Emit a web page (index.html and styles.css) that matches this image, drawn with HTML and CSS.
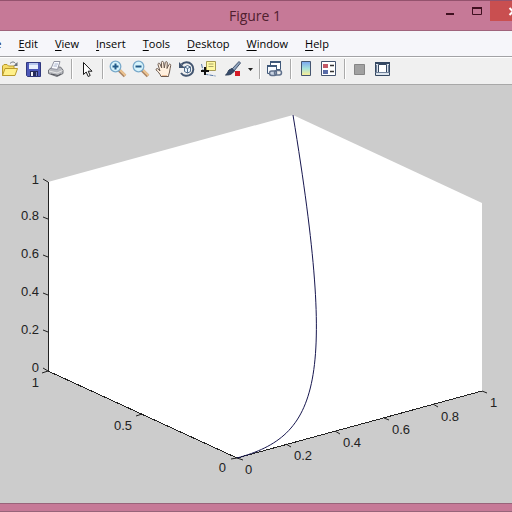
FILE: index.html
```html
<!DOCTYPE html>
<html lang="en">
<head>
<meta charset="utf-8">
<title>Figure 1</title>
<link rel="stylesheet" href="styles.css">
</head>
<body>
<div class="window">
  <header class="titlebar">
    <h1 class="title">Figure 1</h1>
    <div class="controls">
      <button class="control" aria-label="Minimize"><svg viewBox="0 0 26 20"><path d="M8 13h8" stroke="#401020" stroke-width="2"/></svg></button>
      <button class="control" aria-label="Maximize"><svg viewBox="0 0 26 20"><path d="M8.500 7v6.500h9v-7h-9z" fill="none" stroke="#401020"/><path d="M8 7h10" stroke="#401020" stroke-width="2"/></svg></button>
      <button class="control close" aria-label="Close"><svg viewBox="0 0 45 20"><path d="M19.500 7l7 7M26.500 7l-7 7" stroke="#fff" stroke-width="2"/></svg></button>
    </div>
  </header>
  <nav class="menubar">
    <button class="menu"><u>F</u>ile</button>
    <button class="menu"><u>E</u>dit</button>
    <button class="menu"><u>V</u>iew</button>
    <button class="menu"><u>I</u>nsert</button>
    <button class="menu"><u>T</u>ools</button>
    <button class="menu"><u>D</u>esktop</button>
    <button class="menu"><u>W</u>indow</button>
    <button class="menu"><u>H</u>elp</button>
  </nav>
  <div class="toolbar" role="toolbar">
    <button class="tool" aria-label="Open"><svg viewBox="0 0 18 18"><path d="M1.500 15.500V6l1.500-1.500h3L7.500 6H13v9.500z" fill="#f6dc68" stroke="#b99a2c"/><path d="M1.500 15.500L4 8.500h12.500l-2.500 7z" fill="#fff08a" stroke="#b99a2c"/><path d="M9 3.500c2-2 4-2 5.500 0" fill="none" stroke="#687078"/><path d="M16.500 2v4h-4z" fill="#687078"/></svg></button>
    <button class="tool" aria-label="Save"><svg viewBox="0 0 18 18"><path d="M2.500 2.500h14v14h-13l-1-1z" fill="#4d58b8" stroke="#30387e"/><path d="M5 3h9v6H5z" fill="#e9f0fc"/><path d="M5 3h9v2H5z" fill="#b8c8ee"/><path d="M6 11h8v5H6z" fill="#262c58"/><path d="M7 12h2v4H7z" fill="#f4f4fa"/><path d="M12 12h1v4h-1z" fill="#7b84c8"/></svg></button>
    <button class="tool" aria-label="Print"><svg viewBox="0 0 18 18"><path d="M1.500 10l3-2.500 9-.500 2.500 3v3.500l-6 3-8.500-3z" fill="#b7b9be" stroke="#72747b"/><path d="M4 8.500L7 1.500h6l-2.500 8z" fill="#fafbff" stroke="#9294a2"/><path d="M7.500 4h3.500M6.500 6h3.500" stroke="#a5b0ca"/><path d="M2 11l8 2 5.500-2.500" fill="none" stroke="#e8e8e8"/><path d="M4 14l7 1.500 3-1.500" fill="none" stroke="#54565c"/></svg></button>
    <span class="separator"></span>
    <button class="tool" aria-label="Edit plot"><svg viewBox="0 0 18 18"><path d="M5.500 2.500v12l2.700-2.500 2 4.500 2-1-2-4.300H14z" fill="#fff" stroke="#171717"/></svg></button>
    <span class="separator"></span>
    <button class="tool" aria-label="Zoom in"><svg viewBox="0 0 18 18"><path d="M10 10l6 6" stroke="#a98363" stroke-width="3.500"/><path d="M10.500 9.500l6 6" stroke="#edc491" stroke-width="2"/><circle cx="6.500" cy="6.500" r="5.300" fill="#d7f4fc" stroke="#7aaacb" stroke-width="1.300"/><path d="M3.500 6.500h6M6.500 3.500v6" stroke="#225a88" stroke-width="2"/></svg></button>
    <button class="tool" aria-label="Zoom out"><svg viewBox="0 0 18 18"><path d="M10 10l6 6" stroke="#a98363" stroke-width="3.500"/><path d="M10.500 9.500l6 6" stroke="#edc491" stroke-width="2"/><circle cx="6.500" cy="6.500" r="5.300" fill="#d7f4fc" stroke="#7aaacb" stroke-width="1.300"/><path d="M3.500 6.500h6" stroke="#225a88" stroke-width="2"/></svg></button>
    <button class="tool" aria-label="Pan"><svg viewBox="0 0 18 18"><path d="M6 16.500c-1-3-3-4.500-4.800-6.500-.5-1.500 1-2 2-.9L5 11 3 4.700C2.700 3 4.500 2.600 5 4l1.700 4L6.400 2.500c0-1.500 2-1.500 2.200 0L9.300 8l1-5.500c.3-1.400 2.100-1 2 .4L12 8.500l1.800-3.800c.6-1.200 2.200-.6 1.900.8-.5 2.500-.8 4-1.200 6.500-.2 1.500-1 2.500-1 4.500z" fill="#fff0df" stroke="#6b5a50"/><path d="M7 15.500h5" stroke="#efc19a"/></svg></button>
    <button class="tool" aria-label="Rotate 3D"><svg viewBox="0 0 18 18"><path d="M3.500 4.500a6.800 6.800 0 1 1-.5 8.500" fill="none" stroke="#425570" stroke-width="2"/><path d="M1 2v6h6z" fill="#425570"/><path d="M6.500 7l3-1.500L12.500 7v4.500l-3 1.500-3-1.500z" fill="#e9f3fb" stroke="#526d8c"/><path d="M6.500 7l3 1.500 3-1.500M9.500 8.500V13" fill="none" stroke="#526d8c"/></svg></button>
    <button class="tool" aria-label="Data cursor"><svg viewBox="0 0 18 18"><path d="M.5 4c1 5 2 9 5 10.500l9 1.500" fill="none" stroke="#5878a8" stroke-dasharray="4 1"/><path d="M5.500 1.500h9v9h-9z" fill="#fff9a2" stroke="#a69b54"/><path d="M7.500 4h5M7.500 6.500h5" stroke="#aaa66c"/><path d="M0 11h8M4 7v8" stroke="#111" stroke-width="2"/></svg></button>
    <button class="tool" aria-label="Brush"><svg viewBox="0 0 18 18"><path d="M8 9l7-7.500 1.500 1.500L10 11z" fill="#90a4bd" stroke="#445570"/><path d="M8 8.500l2.500 2.500-2 2c-2 2-4.500 2-7 2 2-1 2-3 3.500-5z" fill="#374b6a" stroke="#2c3e59"/><path d="M11 11h5v5h-5z" fill="#d51c27"/></svg></button>
    <button class="tool drop" aria-label="Brush options"><svg viewBox="0 0 11 18"><path d="M3 8h5l-2.500 3z" fill="#222"/></svg></button>
    <span class="separator"></span>
    <button class="tool" aria-label="Link plot"><svg viewBox="0 0 18 18"><path d="M4.500 1.500h10v8h-10z" fill="#fff" stroke="#3f5879"/><path d="M4 2h11" stroke="#3f5879" stroke-width="2"/><path d="M1.500 5.500h9v8h-9z" fill="#f8fbff" stroke="#3f5879"/><path d="M1 6h10" stroke="#3f5879" stroke-width="2"/><rect x="3.500" y="11" width="7" height="4.500" rx="2.200" fill="#c9d3e2" stroke="#60718c" stroke-width="1.500"/><rect x="8.500" y="10.500" width="7" height="4.500" rx="2.200" fill="none" stroke="#60718c" stroke-width="1.500"/></svg></button>
    <span class="separator"></span>
    <button class="tool" aria-label="Insert colorbar"><svg viewBox="0 0 18 18"><defs><linearGradient id="bar" x2="0" y2="1"><stop stop-color="#78a4f0"/><stop offset=".5" stop-color="#a6e2dc"/><stop offset="1" stop-color="#fff092"/></linearGradient></defs><path d="M4.500 1.500h9v14h-9z" fill="url(#bar)" stroke="#455570"/></svg></button>
    <button class="tool" aria-label="Insert legend"><svg viewBox="0 0 18 18"><path d="M1.500 1.500h14v14h-14z" fill="#fff" stroke="#455570"/><path d="M3 4h5v4H3z" fill="#c45866"/><path d="M3 10h5v4H3z" fill="#596ca8"/><path d="M10 5.500h4M10 11.500h4" stroke="#333" stroke-width="1.500"/></svg></button>
    <span class="separator"></span>
    <button class="tool" aria-label="Hide plot tools"><svg viewBox="0 0 18 18"><path d="M3.500 4.500h10v10h-10z" fill="#a1a1a1" stroke="#858585"/></svg></button>
    <button class="tool" aria-label="Show plot tools"><svg viewBox="0 0 18 18"><path d="M1.500 2.500h14v13h-14z" fill="#dce4ed" stroke="#344761"/><path d="M1 3h15" stroke="#344761" stroke-width="2"/><path d="M4.500 4.500h8v8h-8z" fill="#fff" stroke="#344761"/><path d="M1.500 12.500h14M2.500 5v8M14.500 5v8" stroke="#71829a"/></svg></button>
  </div>
  <main class="figure">
    <svg class="plot" viewBox="0 85 512 418" role="img" aria-label="Three-dimensional line plot">
      <path class="walls" d="M48 182L293 115 482 203V391L237 458 48 371z"/>
      <path class="axis" d="M48 182V371L237 458 482 391"/>
      <path class="tick" d="M43 179l5 3M43 217l5 2M43 255l5 2M43 293l5 2M43 330l5 2M43 368l5 3"/>
      <path class="tick" d="M42 373l6-2M136 416l6-2M231 459l6-1"/>
      <path class="tick" d="M237 458l6 2M286 444l5 3M335 431l5 3M384 418l5 2M433 404l5 3M482 391l5 2"/>
      <path class="curve" d="M237 458C318.670 435.670 337.330 384.330 293 115"/>
      <g class="labels end">
        <text x="39" y="184">1</text>
        <text x="39" y="220">0.8</text>
        <text x="39" y="258">0.6</text>
        <text x="39" y="296">0.4</text>
        <text x="39" y="334">0.2</text>
        <text x="39" y="372">0</text>
        <text x="39" y="387">1</text>
        <text x="132" y="430">0.5</text>
        <text x="226" y="472">0</text>
      </g>
      <g class="labels">
        <text x="245" y="474">0</text>
        <text x="294" y="460">0.2</text>
        <text x="343" y="447">0.4</text>
        <text x="392" y="434">0.6</text>
        <text x="441" y="421">0.8</text>
        <text x="490" y="407">1</text>
      </g>
    </svg>
  </main>
</div>
</body>
</html>
```
FILE: styles.css
```css
* { box-sizing: border-box; }
body { margin: 0; background: #eee; overflow-x: hidden; }
button {
  flex: none;
  margin: 0;
  padding: 0;
  border: 0;
  background: none;
  color: inherit;
  font: inherit;
}
svg { display: block; }
.window {
  overflow: hidden;
  background: #c67997;
  border-bottom: 1px solid #98647a;
}
.titlebar {
  display: grid;
  grid-template-columns: 1fr auto 1fr;
  height: 31px;
  padding-right: 2px;
  border-top: 1px solid #94526d;
  border-bottom: 1px solid #a0647c;
}
.title {
  grid-column: 2;
  margin: 0;
  font: 14px/29px "Open Sans", sans-serif;
  color: #50202f;
}
.controls {
  display: flex;
  justify-self: end;
  margin-right: -25px;
}
.control { width: 26px; height: 20px; }
.close { width: 45px; background: #c94f50; }
.menubar {
  display: flex;
  gap: 17px;
  height: 26px;
  margin-left: -16px;
  background: #f6f6fa;
  border-bottom: 1px solid #a2a2a5;
  font: 11px/24px "Open Sans", sans-serif;
  color: #000;
}
.menu u { text-underline-offset: 2px; }
.toolbar {
  display: flex;
  align-items: center;
  height: 28px;
  padding-bottom: 4px;
  margin-left: -1px;
  background: #f0f0f0;
  border-top: 1px solid #fff;
  border-bottom: 1px solid #a8a8a8;
}
.tool { width: 23px; padding-left: 2px; }
.tool svg { width: 18px; height: 18px; }
.drop { width: 11px; padding-left: 0; }
.drop svg { width: 11px; }
.separator {
  flex: none;
  width: 8px;
  height: 20px;
  border-left: 3px solid transparent;
  background: linear-gradient(90deg, #aaa 1px, #fff 1px, #fff 2px, transparent 2px) no-repeat;
}
.figure {
  margin-bottom: 7px;
  background: #ccc;
  border-bottom: 1px solid #99637a;
}
.plot { width: 100%; height: auto; }
.walls { fill: #fff; }
.axis { fill: none; stroke: #222; shape-rendering: crispEdges; }
.tick { fill: none; stroke: #222; }
.curve { fill: none; stroke: #17174f; }
.labels { font: 13px "Liberation Sans", sans-serif; fill: #222; }
.end { text-anchor: end; }
```
